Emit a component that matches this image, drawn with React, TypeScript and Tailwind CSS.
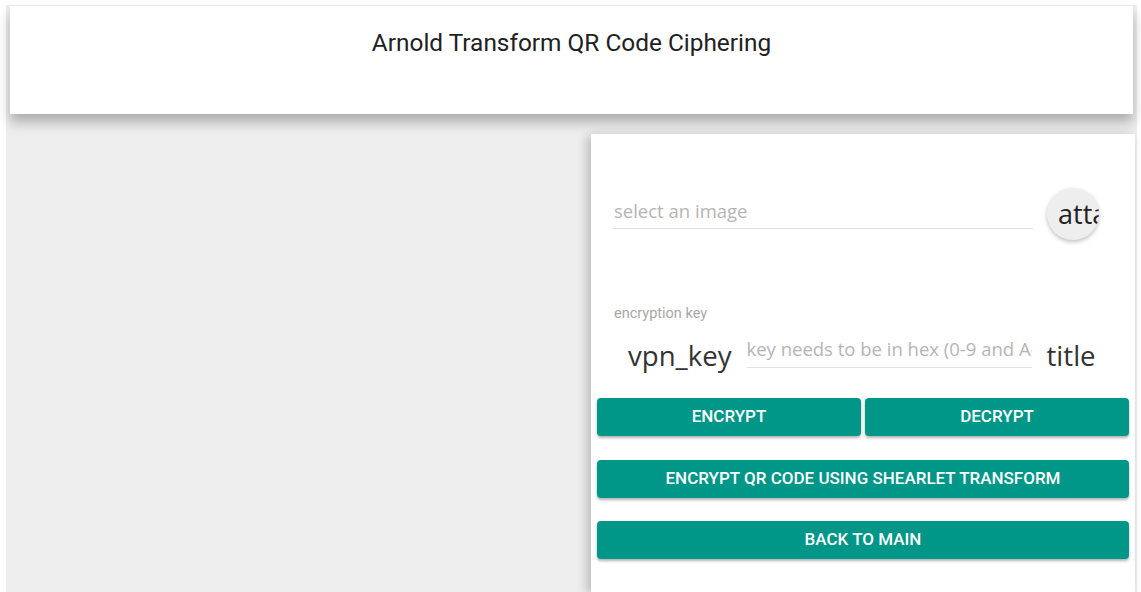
import React from 'react';

const roboto = { fontFamily: 'Roboto, "Liberation Sans", sans-serif' };

function ActionButton({ label, className = '' }: { label: string; className?: string }) {
  return (
    <button
      type="button"
      className={`flex h-[38px] items-center justify-center rounded-[4px] bg-[#009688] text-[17px] font-medium uppercase text-white shadow-[0_2px_3px_rgba(0,0,0,0.3)] ${className}`}
    >
      {label}
    </button>
  );
}

export default function App() {
  return (
    <div className="h-[592px] overflow-hidden bg-white font-['Roboto',sans-serif]">
      <div className="ml-[6px] mt-[5px] flex h-[587px] w-[1131px] flex-col bg-[#eeeeee]">
        <header className="mx-[4px] mt-[1px] h-[108px] bg-white pt-[22px] text-center shadow-[0_8px_12px_rgba(0,0,0,0.28)]">
          <h1 className="text-[24.4px] leading-[30px] text-[#212121]">Arnold Transform QR Code Ciphering</h1>
        </header>

        <div className="flex flex-1 justify-end pr-[2px] pt-[20px]">
          <section className="w-[544px] bg-white px-[6px] pt-[54px] shadow-[-4px_2px_10px_rgba(0,0,0,0.22)]">
            {/* image picker */}
            <div className="flex h-[52px] items-center pl-[16px]">
              <div className="w-[420px] border-b border-[#e2e2e2] pb-[5px]">
                <input
                  type="text"
                  placeholder="select an image"
                  className="block h-[24px] w-full bg-transparent pl-[1px] text-[18.5px] text-[#333] outline-none placeholder:text-[#b5b5b5] font-['Open_Sans',sans-serif]"
                />
              </div>
              <button
                type="button"
                className="ml-[14px] h-[52px] w-[52px] shrink-0 overflow-hidden whitespace-nowrap rounded-full bg-[#eeeeee] pl-[11px] text-left text-[27px] text-[#222] shadow-[0_2px_4px_rgba(0,0,0,0.25)] font-['Open_Sans',sans-serif]"
              >
                attach_file
              </button>
            </div>

            {/* key field */}
            <div className="mt-[66px] pl-[17px] text-[14.5px] leading-[16px] text-[#a8a8a8]" style={roboto}>
              encryption key
            </div>
            <div className="mt-[15px] flex items-start font-['Open_Sans',sans-serif]">
              <span className="ml-[31px] text-[27.6px] leading-[36px] text-[#333]">vpn_key</span>
              <div className="ml-[15px] w-[285px] border-b border-[#e2e2e2] pb-[6px]">
                <input
                  type="text"
                  placeholder="key needs to be in hex (0-9 and A-F)"
                  className="block h-[24px] w-full bg-transparent text-[18.5px] text-[#333] outline-none placeholder:text-[#b5b5b5]"
                />
              </div>
              <span className="ml-[15px] text-[27.6px] leading-[36px] text-[#333]">title</span>
            </div>

            {/* actions */}
            <div className="mt-[25px] flex gap-[4px]" style={roboto}>
              <ActionButton label="Encrypt" className="flex-1" />
              <ActionButton label="Decrypt" className="flex-1" />
            </div>
            <div style={roboto}>
              <ActionButton label="Encrypt QR code using Shearlet Transform" className="mt-[24px] w-full" />
              <ActionButton label="Back to main" className="mt-[23px] w-full" />
            </div>
          </section>
        </div>
      </div>
    </div>
  );
}
